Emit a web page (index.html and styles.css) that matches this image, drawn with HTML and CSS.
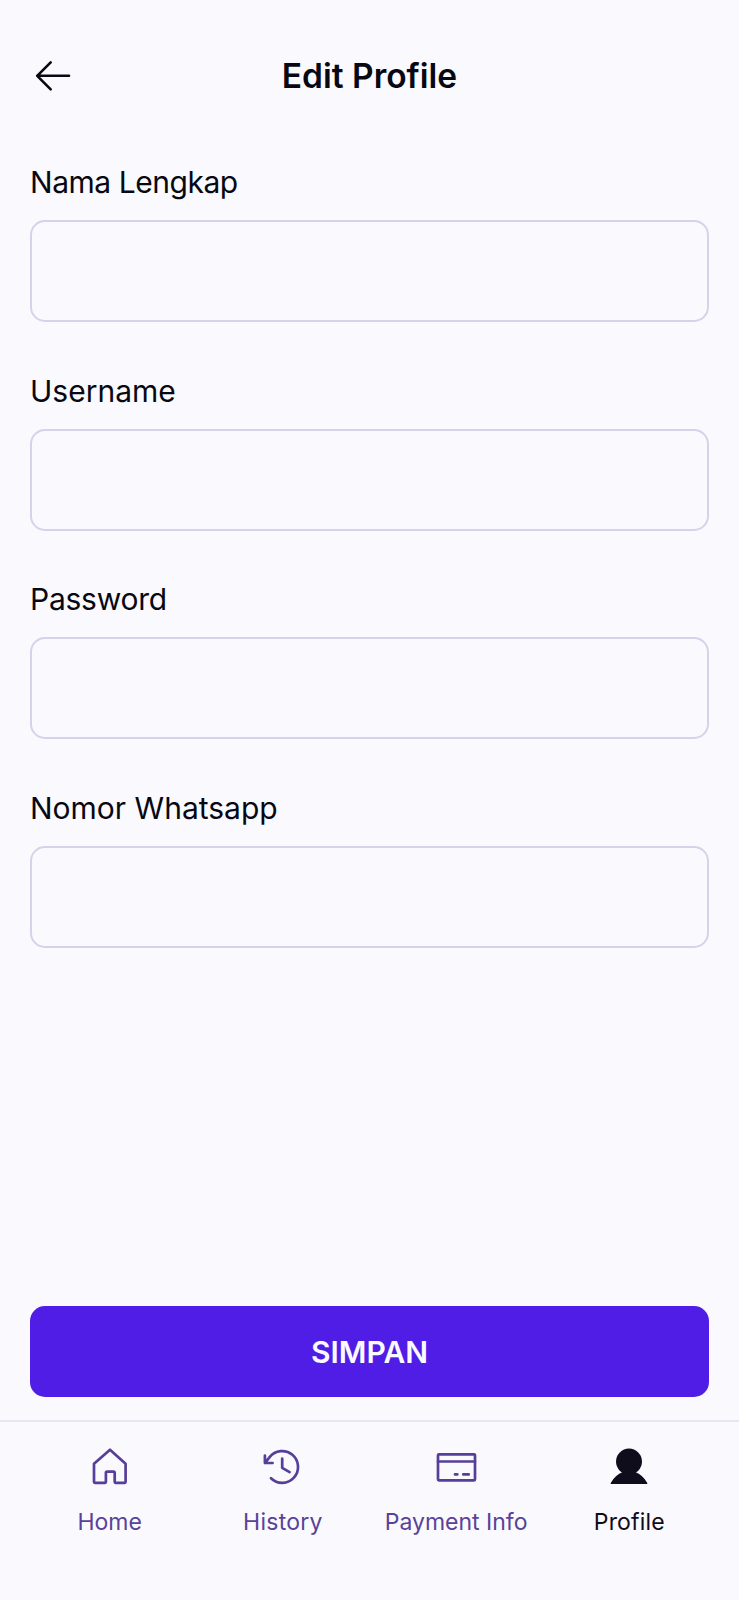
FILE: index.html
```html
<!DOCTYPE html>
<html lang="id">
<head>
<meta charset="utf-8">
<title>Edit Profile</title>
<link rel="stylesheet" href="styles.css">
</head>
<body>
<div class="screen">
  <header class="topbar">
    <a class="back" aria-label="Kembali">
      <svg width="46" height="46" viewBox="0 0 46 46"><path d="M39 23.8H7.2M20.7 10.3L7.2 23.8L20.7 37.3"/></svg>
    </a>
    <h1 class="title">Edit Profile</h1>
  </header>
  <form class="form">
    <div class="field"><label class="label label-name" for="name">Nama Lengkap</label><input class="input" id="name" type="text"></div>
    <div class="field"><label class="label" for="user">Username</label><input class="input" id="user" type="text"></div>
    <div class="field"><label class="label label-pass" for="pass">Password</label><input class="input" id="pass" type="password"></div>
    <div class="field"><label class="label" for="phone">Nomor Whatsapp</label><input class="input" id="phone" type="tel"></div>
    <button class="save" type="button">SIMPAN</button>
  </form>
  <nav class="nav">
    <a class="tab">
      <svg class="icon" width="44" height="44" viewBox="0 0 44 44"><path d="M22 4.7L37.6 18.7V36.6Q37.6 37.8 36.4 37.8H27.9Q26.7 37.8 26.7 36.6V27.8Q26.7 26.6 25.5 26.6H19.1Q17.9 26.6 17.9 27.8V36.6Q17.9 37.8 16.7 37.8H7.2Q6 37.8 6 36.6V18.7Z"/></svg>
      <span class="tab-text">Home</span>
    </a>
    <a class="tab">
      <svg class="icon" width="44" height="44" viewBox="0 0 44 44"><path d="M4 18L8.6 12.2A15.9 15.9 0 1 1 10 33.3M3.9 10.7V18H11.6M21.2 13.5V22.8L28.6 27.1"/></svg>
      <span class="tab-text tab-history">History</span>
    </a>
    <a class="tab">
      <svg class="icon" width="44" height="44" viewBox="0 0 44 44"><rect x="4" y="9.3" width="37" height="26" rx="1"/><path d="M4 16.5H41M21 29.4H23.3M29.3 29.4H34.7"/></svg>
      <span class="tab-text">Payment Info</span>
    </a>
    <a class="tab tab-active">
      <svg class="icon icon-solid" width="44" height="44" viewBox="0 0 44 44"><circle cx="22" cy="16.6" r="13"/><path d="M3.7 39V38Q8 30 16 27L14 24H30L28 27Q36 30 40.3 38V39Z"/></svg>
      <span class="tab-text tab-profile">Profile</span>
    </a>
  </nav>
</div>
</body>
</html>
```
FILE: styles.css
```css
* { box-sizing: border-box; }
body {
  margin: 0;
  background: #f9f9fe;
  color: #080812;
  font-family: Inter, "Liberation Sans", sans-serif;
}
.screen { display: flex; flex-direction: column; height: 1600px; }
.topbar {
  display: grid;
  grid-template-columns: 46px 1fr 46px;
  align-items: center;
  height: 150px;
  padding: 0 30px;
}
.back { height: 46px; }
.back svg {
  display: block;
  fill: none;
  stroke: #090914;
  stroke-width: 2.6;
  stroke-linecap: round;
  stroke-linejoin: round;
}
.title {
  margin: 0;
  padding-top: 1px;
  text-align: center;
  font-size: 33.5px;
  line-height: 46px;
  font-weight: 600;
  white-space: nowrap;
}
.form {
  flex: 1;
  display: flex;
  flex-direction: column;
  gap: 43.67px;
  padding: 12px 30px 23px;
}
.field { display: flex; flex-direction: column; height: 165px; }
.label {
  height: 58px;
  line-height: 41px;
  font-size: 30px;
  white-space: nowrap;
  align-self: flex-start;
}
.label-name { letter-spacing: -0.46px; }
.label-pass { letter-spacing: -0.25px; }
.input {
  width: 100%;
  height: 102px;
  padding: 0 24px;
  border: 2px solid #d5d2e9;
  border-radius: 15px;
  background: transparent;
  font: inherit;
  font-size: 30px;
  outline: none;
}
.save {
  height: 91px;
  margin-top: auto;
  border: 0;
  border-radius: 15px;
  background: #501de6;
  color: #f9f9ff;
  font-family: inherit;
  font-size: 30px;
  line-height: 89px;
  font-weight: 600;
  padding: 2px 0 0;
}
.nav {
  display: grid;
  grid-template-columns: repeat(4, 1fr);
  height: 180px;
  padding: 23px 23px 0;
  border-top: 2px solid #e8e6f2;
}
.tab { display: flex; flex-direction: column; align-items: center; color: #5a4299; }
.tab-active { color: #0f0c1b; }
.icon {
  fill: none;
  stroke: #573e98;
  stroke-width: 2.7;
  stroke-linecap: round;
  stroke-linejoin: round;
}
.icon-solid { fill: #0f0c1b; stroke: none; }
.tab-text { margin-top: 17px; font-size: 23px; line-height: 32px; white-space: nowrap; }
.tab-history { letter-spacing: 0.25px; }
.tab-profile { letter-spacing: 0.2px; }
```
